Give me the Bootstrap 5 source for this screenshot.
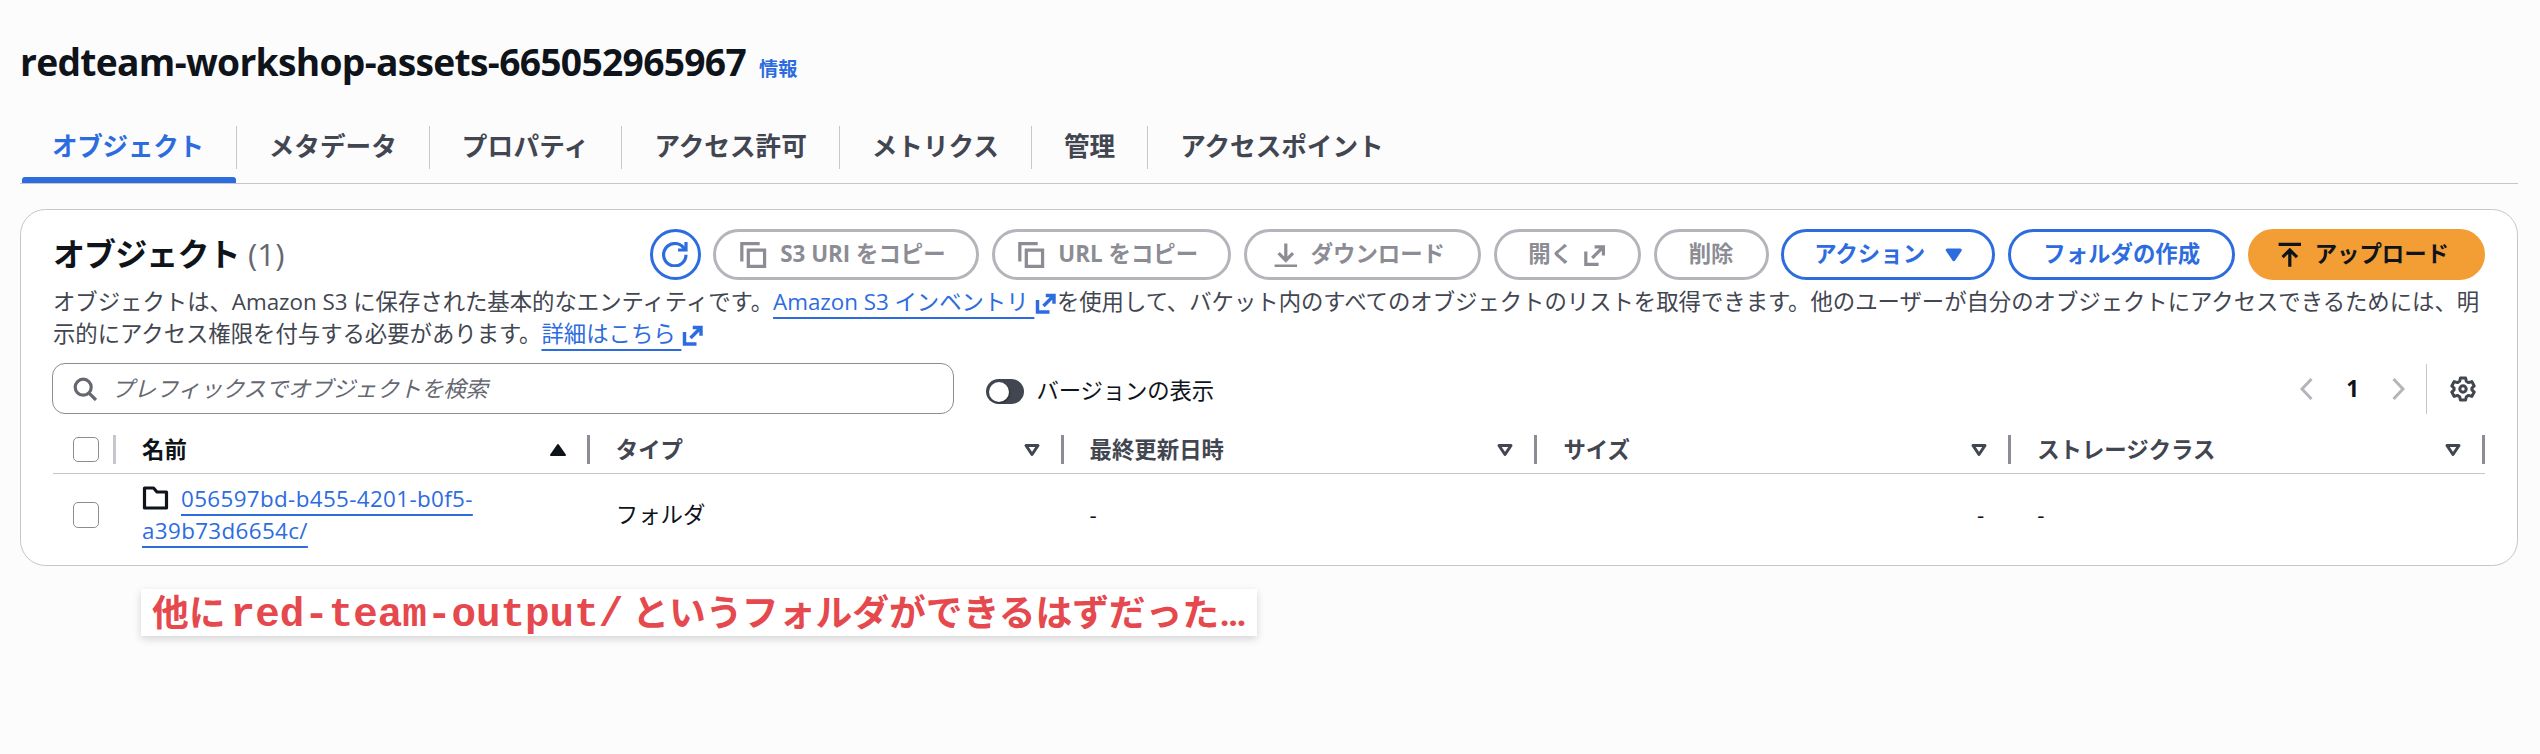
<!DOCTYPE html>
<html lang="ja">
<head>
<meta charset="utf-8">
<title>redteam-workshop-assets-665052965967</title>
<link href="https://cdn.jsdelivr.net/npm/bootstrap@5.3.0/dist/css/bootstrap.min.css" rel="stylesheet">
<style>
  body { background: #fcfcfd; color: #0f141a; font-family: "Open Sans", "Noto Sans CJK JP", sans-serif; font-size: 22.4px; line-height: 32px; }
  svg { display: block; flex: none; fill: none; stroke: currentColor; stroke-width: 2; }
  .page { padding: 37px 22px 0 20px; }
  .bucket-title { font-size: 37.2px; line-height: 49px; font-weight: 700; letter-spacing: -.69px; }
  .info-link { font-size: 19.2px; line-height: 46px; font-weight: 700; color: #2d6cdf; text-decoration: none; margin-left: 13px; padding-top: 9px; }
  a { color: #2d6cdf; }
  .tab-strip { border-bottom: 1.5px solid #c6c6cd; height: 72px; margin-top: 20px; }
  .tab-strip .nav-link { position: relative; height: 70px; padding: 14px 0 13px; color: #424650; font-weight: 700; font-size: 25.6px; }
  .tab-strip .nav-link span { display: block; height: 43px; line-height: 42px; padding: 0 32px; border-right: 1px solid #c6c6cd; }
  .tab-strip .nav-item:last-child span { border: 0; }
  .tab-strip .nav-link.active { color: #2d6cdf; letter-spacing: -.3px; }
  .tab-strip .nav-item:nth-child(3) { letter-spacing: .25px; }
  .tab-strip .nav-link.active::after { content: ""; position: absolute; left: 2px; right: 1px; bottom: -1px; height: 6px; background: #2d6cdf; border-radius: 3px 3px 0 0; }
  .panel { margin-top: 25px; height: 357px; background: #fff; border: 1.5px solid #c6c6cd; border-radius: 25.6px; padding: 19px 32px 0; }
  .panel-title { font-size: 32px; line-height: 49px; font-weight: 700; letter-spacing: -.9px; }
  .panel-title small { font-size: 31.5px; font-weight: 500; color: #656871; letter-spacing: 0; margin-left: 1px; }
  .toolbar { gap: 12.8px; }
  .pill { height: 51px; border: 3px solid #2d6cdf; border-radius: 26px; color: #2d6cdf; background: #fff; font-size: 22.4px; font-weight: 700; line-height: 32px; padding: 0 0 2px; display: flex; align-items: center; justify-content: center; white-space: nowrap; }
  .pill.off { border-color: #b4b4bb; color: #8c8c94; }
  .pill.primary { background: #f39d35; border-color: #f39d35; color: #0f141a; }
  .pill svg { position: relative; top: 1px; }
  .pill.lead-icon { padding-right: 7px; }
  .w-r { width: 51px; } .w-s3 { width: 266px; } .w-url { width: 239px; } .w-dl { width: 237px; } .w-open { width: 147px; }
  .w-del { width: 115px; } .w-act { width: 214px; } .w-new { width: 227px; } .w-up { width: 237px; }
  .desc { margin: 6px 0 0; color: #424650; white-space: nowrap; letter-spacing: -.035px; }
  .desc a, .obj-link { text-decoration-thickness: 2px; text-underline-offset: 6.5px; text-decoration-skip-ink: none; }
  .desc svg { display: inline-block; vertical-align: -5px; color: #2d6cdf; stroke-width: 2.3; margin: 0 0 0 -1.5px; }
  .filters { margin-top: 13px; height: 51px; }
  .search { width: 902px; height: 51px; border: 1.5px solid #8c8c94; border-radius: 13px; padding: 0 19px; margin-left: -1px; }
  .search svg { color: #656871; }
  .search input { border: 0; outline: 0; background: transparent; padding: 0; margin-left: 14px; width: 700px; font-size: 22.4px; line-height: 32px; letter-spacing: -.2px; }
  .search input::placeholder { color: #656871; font-style: italic; opacity: 1; }
  .toggle { width: 38.4px; height: 25.6px; border-radius: 13px; background: #424650; padding: 2.8px; margin-left: 32px; margin-top: 6px; }
  .toggle i { display: block; width: 20px; height: 20px; border-radius: 50%; background: #fff; box-shadow: 1px 1px 2px rgba(0,0,0,.4); }
  .toggle-label { margin: 5px 0 0 12px; letter-spacing: -.15px; }
  .vsep { width: 1px; height: 50px; background: #c6c6cd; margin: 0 23px 0 21px; }
  .page-no { margin: 0 33px 0 33px; }
  .arrow { color: #b4b4bb; }
  .gear { color: #424650; margin-right: 9px; }
  .objects { table-layout: fixed; width: 2432px; margin: 0; border-collapse: separate; border-spacing: 0; --bs-table-bg: transparent; }
  .objects th { height: 60px; padding: 12px 0 0; border-bottom: 1.5px solid #c6c6cd; color: #424650; font-weight: 700; vertical-align: middle; }
  .objects th.sorted { color: #0f141a; }
  .objects td { height: 88px; padding: 0 0 6px 26px; border: 0; vertical-align: middle; color: #0f141a; }
  .objects td.size { padding-right: 27px; }
  .objects .pick { width: 63px; padding-left: 20px; }
  .head-cell { height: 29px; border-right: 3px solid #8c8c94; padding: 0 20px 0 26px; }
  .head-cell.light { border-color: #c6c6cd; padding: 0; }
  .obj-link { letter-spacing: .36px; }
  .box { width: 25.6px; height: 25.6px; border: 1.6px solid #8c8c94; border-radius: 5px; background: #fff; }
  .note { display: inline-block; margin: 23px 0 0 121px; width: 1116px; height: 47px; line-height: 42px; padding-left: 11px; background: #fff; color: #e5484d; font-weight: 700; font-size: 36.8px; white-space: nowrap; box-shadow: 0 3px 8px rgba(0,0,0,.16); font-family: "Noto Sans CJK JP", sans-serif; }
  .note code { font: 700 40.9px/40px "Liberation Mono", monospace; color: inherit; margin: 0 9px 0 5px; }
  .note .dots { font-family: Roboto, sans-serif; }
</style>
</head>
<body class="min-vh-100">
<main class="page min-vh-100">
  <header class="d-flex align-items-start">
    <h1 class="bucket-title m-0">redteam-workshop-assets-665052965967</h1>
    <a class="info-link" href="#">情報</a>
  </header>

  <ul class="nav tab-strip">
    <li class="nav-item"><a class="nav-link active" href="#"><span>オブジェクト</span></a></li>
    <li class="nav-item"><a class="nav-link" href="#"><span>メタデータ</span></a></li>
    <li class="nav-item"><a class="nav-link" href="#"><span>プロパティ</span></a></li>
    <li class="nav-item"><a class="nav-link" href="#"><span>アクセス許可</span></a></li>
    <li class="nav-item"><a class="nav-link" href="#"><span>メトリクス</span></a></li>
    <li class="nav-item"><a class="nav-link" href="#"><span>管理</span></a></li>
    <li class="nav-item"><a class="nav-link" href="#"><span>アクセスポイント</span></a></li>
  </ul>

  <section class="panel">
    <div class="d-flex justify-content-between">
      <h2 class="panel-title m-0">オブジェクト <small>(1)</small></h2>
      <div class="toolbar d-flex">
        <button class="pill w-r" aria-label="更新"><svg width="25.6" height="25.6" viewBox="0 0 16 16"><path d="M15 8a7 7 0 1 1-1.6-4.5L15 5"/><path d="M15 0v5h-5"/></svg></button>
        <button class="pill off lead-icon w-s3"><svg class="me-2" width="28" height="26" viewBox="0 0 17 16"><path d="M1 12V1h11"/><path d="M5 5h10v10H5z"/></svg><span class="ps-1">S3 URI をコピー</span></button>
        <button class="pill off lead-icon w-url"><svg class="me-2" width="28" height="26" viewBox="0 0 17 16"><path d="M1 12V1h11"/><path d="M5 5h10v10H5z"/></svg><span class="ps-1">URL をコピー</span></button>
        <button class="pill off lead-icon w-dl"><svg class="me-2" width="25.6" height="25.6" viewBox="0 0 16 16"><path d="M8 1v10M3.5 7 8 11.5 12.500 7M1 15h14"/></svg><span class="ps-1">ダウンロード</span></button>
        <button class="pill off w-open">開く<svg class="ms-2" width="25.6" height="25.6" viewBox="0 0 16 16"><path d="M8.500 3H14v5.500M14 3 7 10M3 6v8h8"/></svg></button>
        <button class="pill off w-del">削除</button>
        <button class="pill w-act"><span class="ps-1">アクション</span><svg class="ms-3" width="25.6" height="25.6" viewBox="0 0 16 16"><path d="M4 5h8l-4 6z" fill="currentColor" stroke-linejoin="round"/></svg></button>
        <button class="pill w-new">フォルダの作成</button>
        <button class="pill primary lead-icon w-up"><svg class="me-2" width="25.6" height="25.6" viewBox="0 0 16 16"><path d="M8 15.500V6M3.500 9.500 8 5l4.500 4.500M1 1.500h14"/></svg><span class="ps-1">アップロード</span></button>
      </div>
    </div>

    <p class="desc">オブジェクトは、Amazon S3 に保存された基本的なエンティティです。<a href="#">Amazon S3 インベントリ </a><svg width="24" height="24" viewBox="0 0 16 16"><path d="M8.500 3H14v5.500M14 3 7 10M3 6v8h8"/></svg>を使用して、バケット内のすべてのオブジェクトのリストを取得できます。他のユーザーが自分のオブジェクトにアクセスできるためには、明<br>示的にアクセス権限を付与する必要があります。<a href="#">詳細はこちら </a><svg width="24" height="24" viewBox="0 0 16 16"><path d="M8.500 3H14v5.500M14 3 7 10M3 6v8h8"/></svg></p>

    <div class="filters d-flex align-items-center">
      <div class="search d-flex align-items-center">
        <svg width="25.6" height="25.6" viewBox="0 0 16 16"><circle cx="7" cy="7" r="5"/><path d="m10.500 10.500 4.500 4.500"/></svg>
        <input type="text" placeholder="プレフィックスでオブジェクトを検索">
      </div>
      <div class="toggle"><i></i></div>
      <div class="toggle-label">バージョンの表示</div>
      <div class="d-flex align-items-center ms-auto">
        <svg class="arrow" width="13" height="22" viewBox="0 0 13 22"><path d="M11.500 1 2 11l9.500 10" stroke-width="3"/></svg>
        <b class="page-no">1</b>
        <svg class="arrow" width="13" height="22" viewBox="0 0 13 22"><path d="m1.500 1 9.500 10-9.500 10" stroke-width="3"/></svg>
        <div class="vsep"></div>
        <svg class="gear" width="26" height="26" viewBox="0 0 26 26" stroke-linejoin="round"><path stroke-width="3" d="M10.400 2h5.200l.7 3.200 2.300 1.400 3.200-1 2.400 4.300-2.300 2.200v1.800l2.300 2.200-2.400 4.300-3.200-1-2.300 1.400-.7 3.200h-5.200l-.7-3.200-2.300-1.400-3.200 1-2.400-4.300 2.300-2.200v-1.800L1.800 9.900l2.400-4.300 3.200 1 2.300-1.400z"/><circle cx="13" cy="13" r="3.200" stroke-width="3"/></svg>
      </div>
    </div>

    <table class="table objects">
      <thead>
        <tr>
          <th class="pick"><div class="head-cell light d-flex align-items-center"><div class="box"></div></div></th>
          <th class="sorted"><div class="head-cell d-flex align-items-center justify-content-between">名前<svg width="18" height="14" viewBox="0 0 18 14"><path d="M9 2 2 12h14z" fill="currentColor" stroke-linejoin="round"/></svg></div></th>
          <th><div class="head-cell d-flex align-items-center justify-content-between">タイプ<svg width="18" height="14" viewBox="0 0 18 14"><path d="M3 2.500h12L9 11.500z" stroke-width="3" stroke-linejoin="round"/></svg></div></th>
          <th><div class="head-cell d-flex align-items-center justify-content-between">最終更新日時<svg width="18" height="14" viewBox="0 0 18 14"><path d="M3 2.500h12L9 11.500z" stroke-width="3" stroke-linejoin="round"/></svg></div></th>
          <th><div class="head-cell d-flex align-items-center justify-content-between">サイズ<svg width="18" height="14" viewBox="0 0 18 14"><path d="M3 2.500h12L9 11.500z" stroke-width="3" stroke-linejoin="round"/></svg></div></th>
          <th><div class="head-cell d-flex align-items-center justify-content-between">ストレージクラス<svg width="18" height="14" viewBox="0 0 18 14"><path d="M3 2.500h12L9 11.500z" stroke-width="3" stroke-linejoin="round"/></svg></div></th>
        </tr>
      </thead>
      <tbody>
        <tr>
          <td class="pick"><div class="box"></div></td>
          <td><svg class="d-inline-block me-2" width="27" height="26" viewBox="0 0 27 26" style="vertical-align:-4px"><path d="M2.500 3h9l3.500 4h9.500v16h-22z" stroke-width="3.200" stroke-linejoin="round"/></svg><a class="obj-link ms-1" href="#">056597bd-b455-4201-b0f5-<br>a39b73d6654c/</a></td>
          <td>フォルダ</td>
          <td>-</td>
          <td class="size text-end">-</td>
          <td>-</td>
        </tr>
      </tbody>
    </table>
  </section>

  <div class="note">他に<code>red-team-output/</code>というフォルダができるはずだった<span class="dots">…</span></div>
</main>
<script src="https://cdn.jsdelivr.net/npm/bootstrap@5.3.0/dist/js/bootstrap.bundle.min.js"></script>
</body>
</html>
